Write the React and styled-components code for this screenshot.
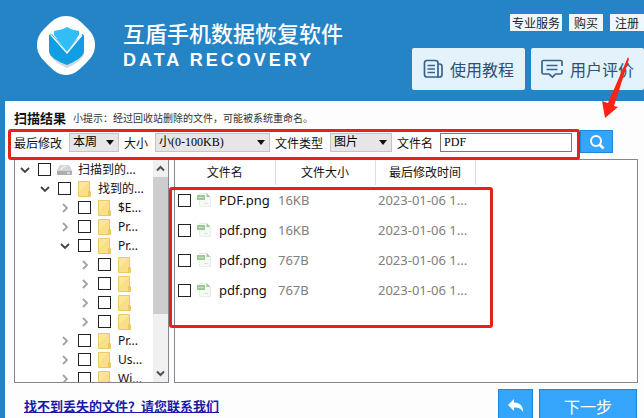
import React from 'react'
import styled, { createGlobalStyle } from 'styled-components'

const tree = [
  { level: 0, open: true, icon: 'drive', name: '扫描到的...' },
  { level: 1, open: true, name: '找到的...' },
  { level: 2, name: '$E...' },
  { level: 2, name: 'Pr...' },
  { level: 2, open: true, name: 'Pr...' },
  { level: 3, name: '' },
  { level: 3, name: '' },
  { level: 3, name: '' },
  { level: 3, name: '' },
  { level: 2, name: 'Pr...' },
  { level: 2, name: 'Us...' },
  { level: 2, name: 'Wi...' },
]

const files = [
  { name: 'PDF.png', size: '16KB', date: '2023-01-06 1...' },
  { name: 'pdf.png', size: '16KB', date: '2023-01-06 1...' },
  { name: 'pdf.png', size: '767B', date: '2023-01-06 1...' },
  { name: 'pdf.png', size: '767B', date: '2023-01-06 1...' },
]

const Logo = () => (
  <svg width='60' height='60' viewBox='0 0 60 60' aria-hidden='true'>
    <path d='M30 1C37 1 42 4 47 9L52 14C57 19 59 24 59 30C59 37 56 42 51 47L47 51C42 56 37 60 30 60C23 60 18 56 13 51L9 47C4 42 1 37 1 30C1 24 3 19 8 14L13 9C18 4 23 1 30 1Z' fill='#fff' />
    <path d='M14 24V40C18 46 24 50 31 53C38 50 44 46 48 40V24Z' fill='#0d3f6b' opacity='.2' />
    <path d='M13 20L16 19L31 37L46 19L48 20V36C48 42 38 47 31 50C23 47 13 42 13 36Z' fill='#119de2' />
    <path d='M18 16C23 15 28 14 31 12C34 14 38 15 43 16V20L31 37L18 20Z' fill='#33bdf7' />
    <path d='M15 20L31 38L46 20' fill='none' stroke='#fff' strokeWidth='1.3' />
  </svg>
)

const BookIcon = () => (
  <svg width='20' height='20' viewBox='0 0 20 20' fill='none' stroke='#36648f' strokeWidth='1.7' aria-hidden='true'>
    <path d='M4 1.5H12.5Q15 1.5 15 4V18H4Q1.500 18 1.500 15.500V4Q1.500 1.500 4 1.500Z' />
    <path d='M15 5H16.500Q19 5 19 7.500V15.500Q19 18 16.500 18H14' />
    <path d='M4.500 6.500H12M4.500 10H12M4.500 13.500H12' />
  </svg>
)

const CommentIcon = () => (
  <svg width='22' height='20' viewBox='0 0 22 20' fill='none' stroke='#36648f' strokeWidth='1.7' aria-hidden='true'>
    <path d='M21 7V3Q21 1.500 19.500 1.500H2.500Q1 1.500 1 3V13.500Q1 15 2.500 15H8L11.500 18L14.500 15H19.500Q21 15 21 13.500V11' />
    <path d='M5.500 6.500H16.500M5.500 10.500H16.500' />
  </svg>
)

const Chevron = ({ open }) => (
  <svg width='10' height='10' viewBox='0 0 10 10' fill='none' aria-hidden='true'>
    {open ? (
      <path d='M1 3L5 7L9 3' stroke='#444' strokeWidth='1.8' />
    ) : (
      <path d='M3 1L7 5L3 9' stroke='#a3a3a3' strokeWidth='1.8' />
    )}
  </svg>
)

const Folder = () => (
  <svg width='15' height='16' viewBox='0 0 15 16' aria-hidden='true'>
    <path d='M1.500 .5H12.500V10L13.500 11V15.500H1.500Z' fill='#fbdf86' stroke='#ecca62' />
    <path d='M12 10V15.500' stroke='#dcb540' />
    <path d='M2 1H12L2 11Z' fill='#fde69a' />
  </svg>
)

const Drive = () => (
  <svg width='15' height='14' viewBox='0 0 15 14' aria-hidden='true'>
    <path d='M4 2H11Q13 2 14 5L15 8V11Q15 12 14 12H1Q0 12 0 11V8L1 5Q2 2 4 2Z' fill='#d3d5d7' />
    <path d='M0 8H15V11Q15 12 14 12H1Q0 12 0 11Z' fill='#a9adb1' />
    <path d='M4 7Q5 4 9 3' stroke='#eee' strokeWidth='1.5' fill='none' />
    <path d='M10 10H13' stroke='#fff' />
  </svg>
)

const FileIcon = () => (
  <svg width='14' height='16' viewBox='0 0 14 16' aria-hidden='true'>
    <path d='M2.500 1.500H9.500L13.500 5V14.500H2.500Z' fill='#f6f9f5' stroke='#e9eee8' />
    <path d='M9.500 1L13.500 5H9.500Z' fill='#9ccb94' />
    <rect y='3' width='8' height='5' fill='#9aca92' />
    <path d='M1.500 5.500H6.500' stroke='#c9e4c4' />
    <path d='M7 11.500H11' stroke='#d6e8d2' />
  </svg>
)

const Dropdown = ({ label, value, width }) => (
  <Field>
    {label}
    <SelectBox $width={width}>
      <select defaultValue={value}>
        <option>{value}</option>
      </select>
      <svg width='8' height='5' viewBox='0 0 8 5' aria-hidden='true'>
        <path d='M0 0H8L4 5Z' fill='#111' />
      </svg>
    </SelectBox>
  </Field>
)

const App = () => {
  return (
    <Page>
      <GlobalStyle />
      <Header>
        <Brand>
          <Logo />
          <div>
            <h1>互盾手机数据恢复软件</h1>
            <p>DATA RECOVERY</p>
          </div>
        </Brand>
        <HeaderSide>
          <SmallLinks>
            <SmallButton>专业服务</SmallButton>
            <SmallButton>购买</SmallButton>
            <SmallButton>注册</SmallButton>
          </SmallLinks>
          <BigLinks>
            <BigButton><BookIcon />使用教程</BigButton>
            <BigButton><CommentIcon />用户评价</BigButton>
          </BigLinks>
        </HeaderSide>
      </Header>

      <Main>
        <ResultTitle>
          <h2>扫描结果</h2>
          <span>小提示：经过回收站删除的文件，可能被系统重命名。</span>
        </ResultTitle>

        <FilterRow>
          <Filters>
            <Dropdown label='最后修改' value='本周' width={50} />
            <Dropdown label='大小' value='小(0-100KB)' width={115} />
            <Dropdown label='文件类型' value='图片' width={62} />
            <Field $grow>
              文件名
              <TextInput type='text' defaultValue='PDF' />
            </Field>
          </Filters>
          <SearchButton aria-label='搜索'>
            <svg width='18' height='18' viewBox='0 0 18 18' fill='none' stroke='#fff' strokeWidth='2' aria-hidden='true'>
              <circle cx='8' cy='8' r='5' />
              <path d='M11.500 11.500L15.500 15.500' strokeWidth='2.500' />
            </svg>
          </SearchButton>
          <Arrow width='30' height='64' viewBox='0 0 30 64' aria-hidden='true'>
            <path d='M28 2L29 4L14 51L18 52L5 63L2 46L8 48Z' fill='#fb2316' />
          </Arrow>
        </FilterRow>

        <Panels>
          <TreePanel>
            <TreeList>
              {tree.map((node, index) => (
                <TreeItem key={index} $level={node.level}>
                  <Chevron open={node.open} />
                  <label>
                    <Check type='checkbox' aria-label={node.name || '文件夹'} />
                    {node.icon === 'drive' ? <Drive /> : <Folder />}
                    <span>{node.name}</span>
                  </label>
                </TreeItem>
              ))}
            </TreeList>
            <Scrollbar>
              <svg width='15' height='17' viewBox='0 0 15 17' fill='none' stroke='#505050' strokeWidth='2' aria-hidden='true'>
                <path d='M4 10.500L7.500 7L11 10.500' />
              </svg>
              <Thumb />
              <svg width='15' height='17' viewBox='0 0 15 17' fill='none' stroke='#505050' strokeWidth='2' aria-hidden='true'>
                <path d='M4 6.500L7.500 10L11 6.500' />
              </svg>
            </Scrollbar>
          </TreePanel>

          <FilePanel>
            <FileTable>
              <colgroup>
                <col width='100' />
                <col width='100' />
                <col width='100' />
                <col />
              </colgroup>
              <thead>
                <tr>
                  <th>文件名</th>
                  <th>文件大小</th>
                  <th>最后修改时间</th>
                  <th />
                </tr>
              </thead>
              <tbody>
                {files.map((file, index) => (
                  <tr key={index}>
                    <td>
                      <FileName>
                        <Check type='checkbox' />
                        <FileIcon />
                        <span>{file.name}</span>
                      </FileName>
                    </td>
                    <td>{file.size}</td>
                    <td>{file.date}</td>
                    <td />
                  </tr>
                ))}
              </tbody>
            </FileTable>
            <Highlight />
          </FilePanel>
        </Panels>

        <Footer>
          <HelpLink href='#help'>找不到丢失的文件？请您联系我们</HelpLink>
          <StepButton $width={35} aria-label='返回'>
            <svg width='18' height='14' viewBox='0 0 18 14' aria-hidden='true'>
              <path d='M7 0V3.500C13 3.500 16 7 16 13C14 9.500 12 8.500 7 8.500V12L1 6Z' fill='#fff' />
            </svg>
          </StepButton>
          <StepButton $width={98}>下一步</StepButton>
        </Footer>
      </Main>
    </Page>
  )
}

const GlobalStyle = createGlobalStyle`
  * {
    box-sizing:border-box;
    margin:0;
    padding:0;
  }

  body {
    overflow:hidden;
    font-family:'Noto Sans CJK SC', sans-serif;
    font-size:12px;
    line-height:18px;
    color:#111;
  }

  svg {
    display:block;
    flex-shrink:0;
  }

  button, input, select {
    font:inherit;
    border-radius:0;
  }
`

const Page = styled.div`
  display:flex;
  flex-direction:column;
  height:100vh;
  background:#2484c6;
`

const Header = styled.header`
  display:flex;
  justify-content:space-between;
  flex-shrink:0;
  height:101px;
  overflow:hidden;
`

const Brand = styled.div`
  display:flex;
  padding:15px 0 0 36px;
  gap:27px;
  color:#fff;

  h1 {
    margin-top:1px;
    font-size:22px;
    font-weight:500;
    line-height:32px;
    white-space:nowrap;
  }

  p {
    font-family:'Liberation Sans', sans-serif;
    font-size:18px;
    font-weight:700;
    line-height:24px;
    letter-spacing:3px;
  }
`

const HeaderSide = styled.div`
  display:flex;
  flex-direction:column;
  align-items:flex-end;
  gap:17px;
  padding-top:14px;
`

const SmallLinks = styled.nav`
  display:flex;
  gap:7px;
`

const SmallButton = styled.button`
  flex-shrink:0;
  min-width:34px;
  height:17px;
  padding:0 2px;
  border:0;
  background:#edf7fd;
  color:#222;
  line-height:17px;
  white-space:nowrap;
`

const BigLinks = styled.nav`
  display:flex;
  gap:6px;
`

const BigButton = styled.button`
  display:flex;
  align-items:center;
  justify-content:center;
  gap:7px;
  width:113px;
  height:42px;
  border:0;
  border-radius:2px;
  background:#e3f2fb;
  color:#2d4f78;
  font-size:16px;
  white-space:nowrap;
`

const Main = styled.main`
  display:flex;
  flex-direction:column;
  flex:1;
  min-height:0;
  margin-left:5px;
  background:#fdfdfe;
`

const ResultTitle = styled.div`
  display:flex;
  align-items:center;
  gap:7px;
  height:28px;
  padding:6px 0 0 9px;

  h2 {
    font-size:13px;
    font-weight:700;
  }

  span {
    font-size:10px;
    color:#333;
  }
`

const FilterRow = styled.div`
  position:relative;
  z-index:1;
  display:flex;
  align-items:flex-start;
  height:30px;
  padding:0 31px 0 3px;
`

const Filters = styled.div`
  display:flex;
  flex:1;
  gap:5px;
  min-width:0;
  height:31px;
  padding:1px 5px 0 3px;
  border:3px solid #e2231a;
  border-radius:3px;
`

const Field = styled.label`
  display:flex;
  align-items:center;
  flex:${({ $grow }) => ($grow ? '1' : 'none')};
  gap:7px;
  min-width:0;
  height:19px;
  white-space:nowrap;
`

const SelectBox = styled.span`
  position:relative;
  width:${({ $width }) => $width}px;

  select {
    display:block;
    width:100%;
    height:19px;
    padding-left:3px;
    appearance:none;
    border:1px solid #c4c4c4;
    background:#e6e6e6;
    color:#000;
    font-family:'Liberation Serif', 'Noto Sans CJK SC', serif;
    line-height:17px;
  }

  svg {
    position:absolute;
    right:5px;
    top:7px;
    pointer-events:none;
  }
`

const TextInput = styled.input`
  flex:1;
  min-width:0;
  height:19px;
  padding-left:3px;
  border:1px solid #7a7a7a;
  background:#fff;
  font-family:'Liberation Serif', serif;
`

const SearchButton = styled.button`
  display:flex;
  align-items:center;
  justify-content:center;
  flex-shrink:0;
  width:33px;
  height:23px;
  margin-top:1px;
  border:1px solid #2189d8;
  background:#35a5fb;
`

/* hand-drawn pointer that lies over the header and points at the search button */
const Arrow = styled.svg`
  position:absolute;
  right:14px;
  bottom:40px;
`

const Panels = styled.div`
  display:flex;
  flex:1;
  gap:5px;
  min-height:0;
  padding:0 6px 0 9px;
`

const TreePanel = styled.div`
  display:flex;
  width:155px;
  border:1px solid #828790;
  background:#fff;
  overflow:hidden;
`

const TreeList = styled.ul`
  flex:1;
  list-style:none;
  overflow:hidden;
`

const TreeItem = styled.li`
  display:flex;
  align-items:center;
  gap:8px;
  height:19px;
  padding-left:${({ $level }) => 5 + $level * 20}px;
  white-space:nowrap;

  label {
    display:flex;
    align-items:center;
    gap:6px;
    font-family:'Noto Sans', 'Noto Sans CJK SC', sans-serif;
  }
`

const Check = styled.input`
  flex-shrink:0;
  width:13px;
  height:13px;
  appearance:none;
  border:1px solid #222;
  background:#fff;

  &:checked {
    background:#2484c6;
  }
`

const Scrollbar = styled.div`
  display:flex;
  flex-direction:column;
  width:15px;
  background:#f0f0f0;
`

const Thumb = styled.div`
  height:137px;
  margin-bottom:auto;
  background:#cdcdcd;
`

const FilePanel = styled.div`
  position:relative;
  flex:1;
  border:1px solid #828790;
  background:#fff;
`

const FileTable = styled.table`
  width:100%;
  table-layout:fixed;
  border-collapse:collapse;
  font-family:'Noto Sans', 'Noto Sans CJK SC', sans-serif;
  font-size:13px;

  th {
    height:25px;
    border-right:1px solid #dedede;
    font-size:12px;
    font-weight:400;
  }

  th:last-child {
    border:0;
  }

  td {
    height:30px;
    padding-left:3px;
    color:#808080;
    white-space:nowrap;
  }
`

const FileName = styled.label`
  display:flex;
  align-items:center;
  gap:6px;
  color:#111;

  span {
    padding-left:2px;
  }
`

const Highlight = styled.div`
  position:absolute;
  top:27px;
  left:-6px;
  width:324px;
  height:141px;
  border:3px solid #e2231a;
  border-radius:3px;
  pointer-events:none;
`

const Footer = styled.footer`
  display:flex;
  align-items:flex-start;
  gap:6px;
  height:35px;
  padding:6px 7px 0 19px;
  overflow:hidden;
`

const HelpLink = styled.a`
  margin:8px auto 0 0;
  color:#1a1aa6;
  font-size:13px;
  font-weight:700;
  white-space:nowrap;
`

const StepButton = styled.button`
  display:flex;
  align-items:center;
  justify-content:center;
  flex-shrink:0;
  width:${({ $width }) => $width}px;
  height:34px;
  border:1px solid #1f86d3;
  background:#35a5fb;
  color:#fff;
  font-size:16px;
`

export default App
